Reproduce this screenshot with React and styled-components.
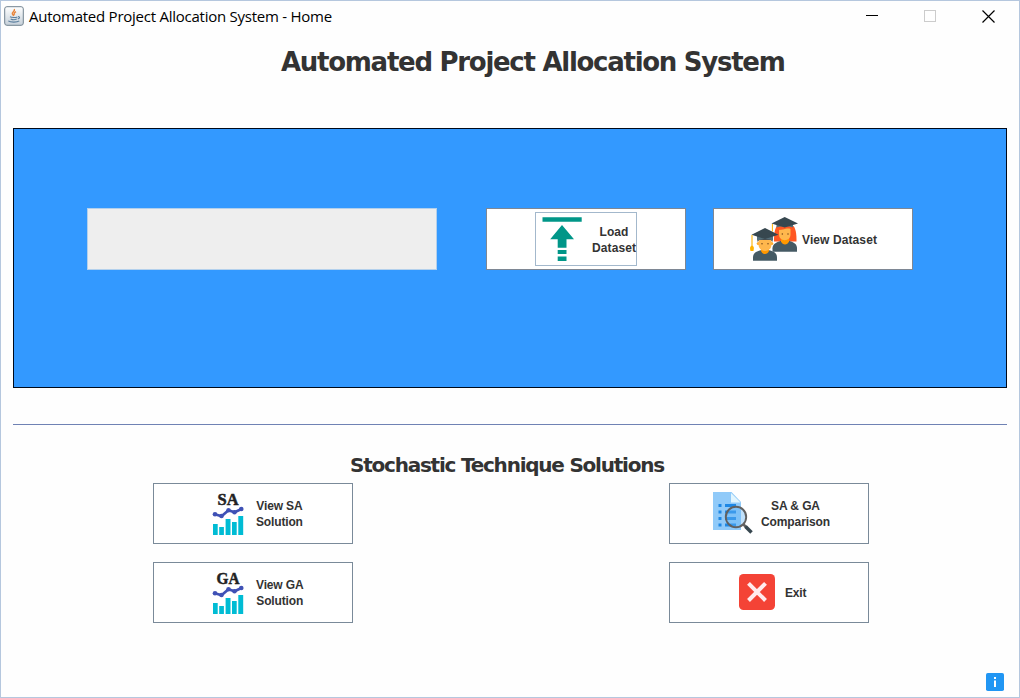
import React from "react";
import styled, { createGlobalStyle } from "styled-components";

const GlobalStyle = createGlobalStyle`
  * { box-sizing: border-box; }
  body { margin: 0; background: #fff; overflow: hidden; }
`;

const Window = styled.div`
  width: 1020px;
  height: 698px;
  display: flex;
  flex-direction: column;
  background: #fefefe;
  border: 1px solid #b5c7de;
  color: #333;
  font-family: "Liberation Sans", Arial, sans-serif;
`;

const TitleBar = styled.header`
  display: flex;
  align-items: center;
  flex: none;
  height: 31px;
  padding: 0 1px 0 3px;
  color: #000;
`;

const WindowTitle = styled.span`
  flex: 1;
  margin-left: 5px;
  padding-bottom: 2px;
  font: 15px/20px "Open Sans", "Noto Sans", sans-serif;
  letter-spacing: -0.25px;
  white-space: nowrap;
`;

const WindowControl = styled.span`
  display: flex;
  justify-content: center;
  width: 58.5px;
`;

const Content = styled.main`
  display: flex;
  flex-direction: column;
  padding: 0 12px;
`;

const Heading = styled.h1`
  align-self: flex-start;
  margin: 12px 0 0 268px;
  font: bold 26px/36px "DejaVu Sans", sans-serif;
  letter-spacing: -1.28px;
  white-space: nowrap;
`;

const Subheading = styled.h2`
  align-self: flex-start;
  margin: 25px 0 0 337px;
  font: bold 20px/30px "DejaVu Sans", sans-serif;
  letter-spacing: -1.23px;
  white-space: nowrap;
`;

const DatasetPanel = styled.section`
  display: flex;
  align-items: flex-start;
  gap: 27px;
  height: 260px;
  margin-top: 48px;
  padding: 79px 0 0 73px;
  background: #3399ff;
  border: 1px solid #000a1a;
`;

const FileField = styled.div`
  width: 350px;
  height: 62px;
  margin-right: 22px;
  background: #eee;
  border: 1px solid #b3d0ec;
`;

const Button = styled.button`
  display: flex;
  align-items: center;
  width: 200px;
  height: ${(p) => p.$height || 61}px;
  margin: 0;
  padding: 0 0 0 ${(p) => p.$inset || 0}px;
  background: #fff;
  border: 1px solid ${(p) => p.$edge || "#7a8a99"};
  border-radius: 0;
  color: #333;
  font: bold 12px/16px "Liberation Sans", Arial, sans-serif;
`;

const FocusFrame = styled.span`
  display: flex;
  align-items: center;
  width: 102px;
  height: 54px;
  border: 1px solid #a3b8cc;
`;

const Label = styled.span`
  margin-left: ${(p) => p.$gap || 0}px;
  padding-top: ${(p) => p.$drop || 0}px;
  letter-spacing: ${(p) => p.$spacing || "normal"};
  text-align: center;
  white-space: nowrap;
`;

const Divider = styled.hr`
  width: 100%;
  height: 1px;
  margin: 36px 0 0;
  border: 0;
  background: #6f82b4;
`;

const Actions = styled.div`
  display: grid;
  grid-template-columns: 200px 200px;
  column-gap: 316px;
  row-gap: 18px;
  margin: 3px 0 0 140px;
`;

const Footer = styled.footer`
  display: flex;
  justify-content: flex-end;
  margin-top: 50px;
  padding-right: 3px;
`;

const Icon = styled.svg`
  display: block;
  flex: none;
  margin-bottom: ${(p) => p.$lift || 0}px;
`;

const JavaIcon = () => (
  <Icon width="20" height="20" viewBox="0 0 20 20" $lift={1}>
    <defs>
      <linearGradient id="tile" x1="0" y1="0" x2="0" y2="1">
        <stop offset="0" stopColor="#fff" />
        <stop offset="1" stopColor="#c6d0d9" />
      </linearGradient>
    </defs>
    <rect x="0.7" y="0.7" width="18.6" height="18.6" rx="2.2" fill="url(#tile)" stroke="#71828f" />
    <path d="M10.3 3c1.2 2-2.6 3-2 4.7.3.9 1.2 1.3 1.4 2.3M12 5.6c-2 1.2-2.4 2-1.2 3" fill="none" stroke="#e8853c" strokeWidth="1.4" />
    <path d="M6 10.8c1.5.9 5.8.9 7.4.1M6.7 12.9c1.8.9 4.3.9 6 .1M4.3 14.8c2 1.7 9 1.7 11 0M14 10.7c2.2-.3 2 1.7-.2 2.3" fill="none" stroke="#5b7f9e" strokeWidth="1.1" />
  </Icon>
);

const MinimizeIcon = () => (
  <Icon width="12" height="12" viewBox="0 0 12 12" $lift={1}>
    <path d="M0 5.5h12" stroke="#000" />
  </Icon>
);

const MaximizeIcon = () => (
  <Icon width="12" height="12" viewBox="0 0 12 12" $lift={1}>
    <rect x="0.5" y="0.5" width="11" height="11" fill="none" stroke="#ccc" />
  </Icon>
);

const CloseIcon = () => (
  <Icon width="13" height="13" viewBox="0 0 13 13">
    <path d="M.5 .5l12 12M12.5 .5l-12 12" stroke="#000" strokeWidth="1.2" />
  </Icon>
);

const UploadIcon = () => (
  <Icon width="52" height="52" viewBox="0 0 52 52" fill="#009688">
    <path d="M6.5 4.3h39.2v4.5H6.5zM26 12L38 26.3h-7.5v8.5h-8.8v-8.5H14.2zM21.7 37h8.8v4h-8.8zM21.7 43.5h8.8v4.5h-8.8z" />
  </Icon>
);

const StudentsIcon = () => (
  <Icon width="52" height="48" viewBox="748 215 52 48">
    <path d="M777 226c-3 4-3 10-3 15.5h22.500c0-5 0-11.500-3-15.500z" fill="#ff5722" />
    <path d="M772.5 251.8v-3.500c0-4.500 4-6 8-7.300h9c4 1.300 7.500 2.800 7.500 7.300v3.500z" fill="#455a64" />
    <path d="M781 238h8v3.500c-1.500 4-6.500 4-8 0z" fill="#ff9800" />
    <path d="M779 228.500h11.500v6c0 7.500-11.500 7.500-11.500 0z" fill="#ffb74d" />
    <path d="M778 230c5 0 8-1 10-3l4 3v-4h-14z" fill="#ff5722" />
    <circle cx="782.3" cy="234" r=".75" fill="#784719" />
    <circle cx="788" cy="234" r=".75" fill="#784719" />
    <path d="M776.5 223h16.500v4.500c-5-1.700-11.500-1.700-16.500 0z" fill="#546e7a" />
    <path d="M771.5 223.500l13.200-6.500 13.300 6.500-13.300 4z" fill="#37474f" />
    <path d="M772.4 224v7.500" fill="none" stroke="#ffb300" />
    <path d="M753 260.8v-3.500c0-4.500 4-6 8-7h8c4 1 8 2.500 8 7v3.500z" fill="#455a64" />
    <path d="M761 248h8v3c-1.500 4-6.500 4-8 0z" fill="#ff9800" />
    <circle cx="758.3" cy="243.5" r="1.6" fill="#ffa726" />
    <circle cx="771.7" cy="243.5" r="1.6" fill="#ffa726" />
    <path d="M758.500 239h13v5.500c0 8.500-13 8.500-13 0z" fill="#ffb74d" />
    <path d="M757.500 242v-4h15v4l-1.500-2h-12z" fill="#424242" />
    <circle cx="762" cy="243.7" r=".75" fill="#784719" />
    <circle cx="768" cy="243.7" r=".75" fill="#784719" />
    <path d="M757 235h16v5.500c-5-1.700-11-1.700-16 0z" fill="#546e7a" />
    <path d="M751.5 234.700l13.500-6.700 13.500 6.700-13.500 4.300z" fill="#37474f" />
    <path d="M752 235v11.500" fill="none" stroke="#ffb300" strokeWidth="1.1" />
    <path d="M752 245.500c-2.500 1-2 3-1.500 5.500h3c.5-2.500 1-4.500-1.500-5.500z" fill="#ffb300" />
  </Icon>
);

const ChartIcon = ({ code }) => (
  <Icon width="32" height="46" viewBox="212 491 32 46">
    <text x="228" y="505" textAnchor="middle" textLength={code === "GA" ? 23 : 21} lengthAdjust="spacingAndGlyphs" fontFamily="Liberation Serif, serif" fontWeight="bold" fontSize="16" fill="#222" stroke="#222" strokeWidth=".5">{code}</text>
    <path d="M215 514.3l6.500 2 7-6 6 2 7-3.300" fill="none" stroke="#3f51b5" strokeWidth="2.7" />
    <g fill="#3f51b5">
      <circle cx="215" cy="514.3" r="2.3" />
      <circle cx="221.5" cy="516" r="2.3" />
      <circle cx="228.5" cy="510.3" r="2.3" />
      <circle cx="234.5" cy="512.3" r="2.3" />
      <circle cx="241.3" cy="509" r="2.3" />
    </g>
    <path d="M213 524h4.700v11H213zM219.200 527h4.700v8h-4.700zM225.600 519h4.900v16h-4.900zM232 522h4.700v13H232zM238.300 516h4.900v19h-4.900z" fill="#00bcd4" />
  </Icon>
);

const ComparisonIcon = () => (
  <Icon width="42" height="44" viewBox="712 491 42 44" $lift={2}>
    <path d="M713 492h18.500l9.500 10v28h-28z" fill="#90caf9" />
    <path d="M731 493v9.500h9.500z" fill="#e1f5fe" />
    <path d="M718.500 504h3v3h-3zM725 504h11v3h-11zM718.500 510.500h3v3h-3zM725 510.500h11v3h-11zM718.500 517h3v3h-3zM725 517h11v3h-11zM718.500 523.500h3v3h-3zM725 523.500h11v3h-11z" fill="#1e88e5" />
    <path d="M743.500 524.500l3 3" stroke="#616161" strokeWidth="2.5" />
    <path d="M745.500 526.500l6 6" stroke="#37474f" strokeWidth="3.6" />
    <circle cx="736" cy="517" r="10.2" fill="#64b5f6" fillOpacity=".4" stroke="#616161" strokeWidth="1.9" />
  </Icon>
);

const ExitIcon = () => (
  <Icon width="36" height="36" viewBox="0 0 36 36" $lift={2}>
    <rect width="36" height="36" rx="4.5" fill="#f44336" />
    <path d="M9.5 9.3l17 17.200M26.500 9.300L9.500 26.500" stroke="#ffebee" strokeWidth="4" />
  </Icon>
);

const InfoIcon = () => (
  <Icon width="18" height="18" viewBox="0 0 18 18">
    <rect width="18" height="18" rx="1.8" fill="#2196f3" />
    <path d="M8 4h2v2H8zM8 7.500h2V14H8z" fill="#fff" />
  </Icon>
);

export default function App() {
  return (
    <>
      <GlobalStyle />
      <Window>
        <TitleBar>
          <JavaIcon />
          <WindowTitle>Automated Project Allocation System - Home</WindowTitle>
          <WindowControl><MinimizeIcon /></WindowControl>
          <WindowControl><MaximizeIcon /></WindowControl>
          <WindowControl><CloseIcon /></WindowControl>
        </TitleBar>
        <Content>
          <Heading>Automated Project Allocation System</Heading>
          <DatasetPanel>
            <FileField />
            <Button $height={62} $inset={48} $edge="#7e8794">
              <FocusFrame>
                <UploadIcon />
                <Label $gap={4} $drop={2} $spacing="0.1px">Load<br />Dataset</Label>
              </FocusFrame>
            </Button>
            <Button $height={62} $inset={34} $edge="#7e8794">
              <StudentsIcon />
              <Label $gap={2} $drop={2} $spacing="0.1px">View Dataset</Label>
            </Button>
          </DatasetPanel>
          <Divider />
          <Subheading>Stochastic Technique Solutions</Subheading>
          <Actions>
            <Button $inset={58}>
              <ChartIcon code="SA" />
              <Label $gap={12} $spacing="-0.15px">View SA<br />Solution</Label>
            </Button>
            <Button $inset={42}>
              <ComparisonIcon />
              <Label $gap={7} $spacing="-0.1px">SA &amp; GA<br />Comparison</Label>
            </Button>
            <Button $inset={58}>
              <ChartIcon code="GA" />
              <Label $gap={12} $spacing="-0.15px">View GA<br />Solution</Label>
            </Button>
            <Button $inset={69}>
              <ExitIcon />
              <Label $gap={10} $spacing="-0.2px">Exit</Label>
            </Button>
          </Actions>
          <Footer><InfoIcon /></Footer>
        </Content>
      </Window>
    </>
  );
}
